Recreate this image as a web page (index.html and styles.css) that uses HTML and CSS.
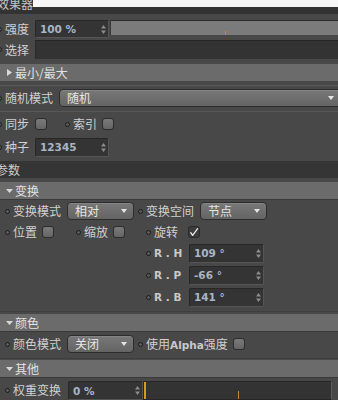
FILE: index.html
```html
<!DOCTYPE html>
<html lang="zh">
<head>
<meta charset="utf-8">
<title>效果器</title>
<link rel="stylesheet" href="styles.css">
</head>
<body>
<div class="cap"></div>
<div class="title"><span>效果器</span></div>

<div class="row top r-strength">
  <i class="dot"></i><span class="lbl w30">强度</span>
  <div class="num"><span class="val">100 %</span><svg class="spin" width="5" height="9" viewBox="0 0 5 9"><path d="M0 3.6L2.5 0L5 3.6Z M0 5.4L2.5 9L5 5.4Z" fill="#8c8c8c"/></svg></div>
  <div class="track"><i class="tick"></i></div>
</div>
<div class="row top r-select">
  <i class="dot"></i><span class="lbl w30">选择</span>
  <div class="wide-field"></div>
</div>
<div class="hdr mt5"><svg class="tri" width="5" height="7" viewBox="0 0 5 7"><path d="M0 0L5 3.5L0 7Z" fill="#d8d8d8"/></svg><span>最小/最大</span></div>
<div class="groove g1"></div>
<div class="row top r-mode">
  <i class="dot"></i><span class="lbl w54">随机模式</span>
  <div class="dd dd-wide"><span>随机</span><i class="arrow"></i></div>
</div>
<div class="groove g2"></div>
<div class="row top r-sync">
  <i class="dot"></i><span class="lbl w30">同步</span><i class="cb"></i>
  <i class="dot ml18"></i><span class="lbl w29">索引</span><i class="cb"></i>
</div>
<div class="row top r-seed">
  <i class="dot"></i><span class="lbl w30">种子</span>
  <div class="num"><span class="val">12345</span><svg class="spin" width="5" height="9" viewBox="0 0 5 9"><path d="M0 3.6L2.5 0L5 3.6Z M0 5.4L2.5 9L5 5.4Z" fill="#8c8c8c"/></svg></div>
</div>
<div class="dark-hdr"><span>参数</span></div>

<div class="hdr mt4 open"><svg class="tri-d" width="7" height="4" viewBox="0 0 7 4"><path d="M0 0L7 0L3.5 4Z" fill="#d8d8d8"/></svg><span>变换</span></div>
<div class="row sec r-tmode">
  <i class="dot"></i><span class="lbl w54">变换模式</span>
  <div class="dd dd-s"><span>相对</span><i class="arrow"></i></div>
  <i class="dot ml4"></i><span class="lbl w54">变换空间</span>
  <div class="dd dd-s"><span>节点</span><i class="arrow"></i></div>
</div>
<div class="row sec r-pos">
  <div class="cell c1"><i class="dot"></i><span class="lbl w29">位置</span><i class="cb"></i></div>
  <div class="cell c2"><i class="dot"></i><span class="lbl w29">缩放</span><i class="cb"></i></div>
  <div class="cell"><i class="dot"></i><span class="lbl w34">旋转</span><i class="cb on"><svg width="10" height="10" viewBox="0 0 10 10"><path d="M1.8 5.6L3.6 8.4L8.6 1.6" fill="none" stroke="#e6e6e6" stroke-width="1.3" stroke-linecap="round" stroke-linejoin="round"/></svg></i></div>
</div>
<div class="row rot">
  <i class="dot"></i><span class="lbl w35 rl">R . H</span>
  <div class="num n75"><span class="val">109 °</span><svg class="spin" width="5" height="9" viewBox="0 0 5 9"><path d="M0 3.6L2.5 0L5 3.6Z M0 5.4L2.5 9L5 5.4Z" fill="#8c8c8c"/></svg></div>
</div>
<div class="row rot">
  <i class="dot"></i><span class="lbl w35 rl">R . P</span>
  <div class="num n75"><span class="val">-66 °</span><svg class="spin" width="5" height="9" viewBox="0 0 5 9"><path d="M0 3.6L2.5 0L5 3.6Z M0 5.4L2.5 9L5 5.4Z" fill="#8c8c8c"/></svg></div>
</div>
<div class="row rot">
  <i class="dot"></i><span class="lbl w35 rl">R . B</span>
  <div class="num n75"><span class="val">141 °</span><svg class="spin" width="5" height="9" viewBox="0 0 5 9"><path d="M0 3.6L2.5 0L5 3.6Z M0 5.4L2.5 9L5 5.4Z" fill="#8c8c8c"/></svg></div>
</div>
<div class="sep s1"></div>

<div class="hdr open"><svg class="tri-d" width="7" height="4" viewBox="0 0 7 4"><path d="M0 0L7 0L3.5 4Z" fill="#d8d8d8"/></svg><span>颜色</span></div>
<div class="row sec r-color">
  <i class="dot"></i><span class="lbl w54">颜色模式</span>
  <div class="dd dd-s"><span>关闭</span><i class="arrow"></i></div>
  <i class="dot ml4"></i><span class="lbl mix">使用<b>Alpha</b>强度</span><i class="cb"></i>
</div>
<div class="sep s2"></div>

<div class="hdr open"><svg class="tri-d" width="7" height="4" viewBox="0 0 7 4"><path d="M0 0L7 0L3.5 4Z" fill="#d8d8d8"/></svg><span>其他</span></div>
<div class="row sec r-weight">
  <i class="dot"></i><span class="lbl w55">权重变换</span>
  <div class="num n75"><span class="val">0 %</span><svg class="spin" width="5" height="9" viewBox="0 0 5 9"><path d="M0 3.6L2.5 0L5 3.6Z M0 5.4L2.5 9L5 5.4Z" fill="#8c8c8c"/></svg></div>
  <div class="dslider"><i class="zero"></i><i class="mid"></i></div>
</div>
</body>
</html>
```

FILE: styles.css
```css
* { box-sizing: border-box; margin: 0; padding: 0; }
html, body { width: 338px; height: 400px; overflow: hidden; }
body {
  background: #484848;
  font-family: "Noto Sans CJK SC", "Noto Sans", sans-serif;
  font-size: 12px;
  color: #d0d0d0;
  position: relative;
}
i { display: block; font-style: normal; }

.cap { position: absolute; left: 33px; top: 0; right: 0; height: 7px; background: #f7f7f7; }

.title { height: 14px; background: #333333; overflow: hidden; }
.title span { display: block; margin: -5px 0 0 -3px; line-height: 17px; color: #c4c4c4; }

.row { display: flex; align-items: center; }
.lbl { flex: none; white-space: nowrap; line-height: 14px; }
.w29 { width: 29px; }
.w30 { width: 30px; }
.w34 { width: 34px; }
.w35 { width: 35px; }
.w54 { width: 54px; }
.w55 { width: 55px; }

.dot {
  flex: none;
  width: 5px; height: 5px;
  border: 1px solid #1c1c1c;
  border-radius: 50%;
  background: #5a5a5a;
  margin-right: 3px;
}
.top > .dot:first-child { margin-left: -3px; }
.ml18 { margin-left: 18px; }
.ml4 { margin-left: 4px; }

/* numeric field */
.num {
  flex: none;
  width: 74px; height: 18px;
  background: #343434;
  border: 1px solid #272727;
  border-right-color: #555;
  border-bottom-color: #555;
  border-radius: 2px;
  display: flex; align-items: center; justify-content: space-between;
  padding: 0 1px 0 4px;
}
.n75 { width: 75px; height: 19px; }
.val {
  font-family: "DejaVu Sans", Verdana, sans-serif;
  font-weight: bold;
  font-size: 10.5px;
  color: #a9b5c7;
  white-space: nowrap;
}
.spin { flex: none; margin-right: 1px; }

/* rows top section */
.r-strength { height: 26px; padding-top: 6px; padding-bottom: 2px; align-items: center; }
.track {
  flex: 1;
  align-self: flex-start;
  height: 15px;
  margin-left: 1px;
  background: #7b7b7b;
  border-top: 1px solid #2b2b2b;
  border-left: 1px solid #3a3a3a;
  display: flex;
}
.tick { width: 1px; height: 4px; background: #c08b2a; align-self: flex-end; margin-left: 114px; }

.r-select { height: 19px; }
.wide-field {
  flex: 1; height: 19px;
  background: #333;
  border-top: 1px solid #262626;
  border-left: 1px solid #2a2a2a;
}
.mt5 { margin-top: 5px; }
.mt4 { margin-top: 4px; }

.hdr {
  height: 17px;
  background: #6b6b6b;
  display: flex; align-items: center;
  color: #e2e2e2;
  line-height: 14px;
}
.hdr .tri { margin-left: 7px; margin-right: 3px; }
.hdr .tri-d { margin-left: 6px; margin-right: 2px; }
.hdr.open { border-bottom: 1px solid #3a3a3a; height: 18px; }

.groove { border-bottom: 1px solid #585858; }
.g1 { height: 5px; margin-bottom: 3px; }
.g2 { height: 5px; }

.r-mode { height: 18px; }
.dd {
  flex: none;
  height: 18px;
  border: 1px solid #2d2d2d;
  border-radius: 4px;
  background: linear-gradient(#787878, #646464);
  box-shadow: inset 0 1px 0 #858585;
  display: flex; align-items: center; justify-content: space-between;
  padding: 0 6px 0 7px;
  color: #e6e6e6;
  line-height: 14px;
}
.dd-wide { flex: 1; margin-right: -6px; padding-right: 9px; border-radius: 4px; }
.dd-s { width: 67px; }
.arrow {
  width: 0; height: 0;
  border-left: 3.5px solid transparent;
  border-right: 3.5px solid transparent;
  border-top: 4px solid #e4e4e4;
}

.r-sync { height: 24px; }
.r-seed { height: 22px; }
.r-seed .num { height: 19px; }

.cb {
  flex: none;
  width: 12px; height: 12px;
  border: 1px solid #2b2b2b;
  border-radius: 3px;
  background: linear-gradient(#7a7a7a, #656565);
  display: flex; align-items: center; justify-content: center;
}
.cb.on { background: #3c3c3c; border-color: #2a2a2a; }

.dark-hdr {
  height: 17px; margin-top: 3px;
  background: #353535;
  display: flex; align-items: center;
  color: #cdcdcd; line-height: 14px;
}
.dark-hdr span { margin-left: -4px; }

/* transform section */
.sec { padding-left: 5px; }
.r-tmode { height: 22px; }
.r-pos { height: 20px; }
.cell { display: flex; align-items: center; flex: none; }
.c1 { width: 71px; }
.c2 { width: 70px; }
.rot { height: 22px; padding-left: 146px; }
.rl {
  font-family: "DejaVu Sans", Verdana, sans-serif;
  font-weight: bold;
  font-size: 10.5px;
  color: #c9c9c9;
}

.sep { height: 6px; }
.s1 { border-bottom: 1px solid #3e3e3e; height: 4px; margin-bottom: 2px; }
.s2 { border-bottom: 1px solid #3e3e3e; height: 3px; margin-bottom: 1px; }

.r-color { height: 24px; }
.mix { margin-right: 5px; }
.mix b {
  font-family: "DejaVu Sans", Verdana, sans-serif;
  font-weight: bold;
  font-size: 10.5px;
  color: #c9c9c9;
}

.r-weight { height: 22px; align-items: flex-start; padding-top: 3px; }
.r-weight .dot { margin-top: 7px; }
.r-weight .lbl { margin-top: 2px; }
.dslider {
  flex: none;
  width: 189px; height: 19px;
  background: #333;
  border: 1px solid #262626;
  border-right-color: #5c5c5c;
  display: flex;
}
.zero { width: 2px; background: #d49a1e; }
.mid { width: 1px; height: 8px; background: #c08b2a; align-self: flex-end; margin-left: 92px; }
```
